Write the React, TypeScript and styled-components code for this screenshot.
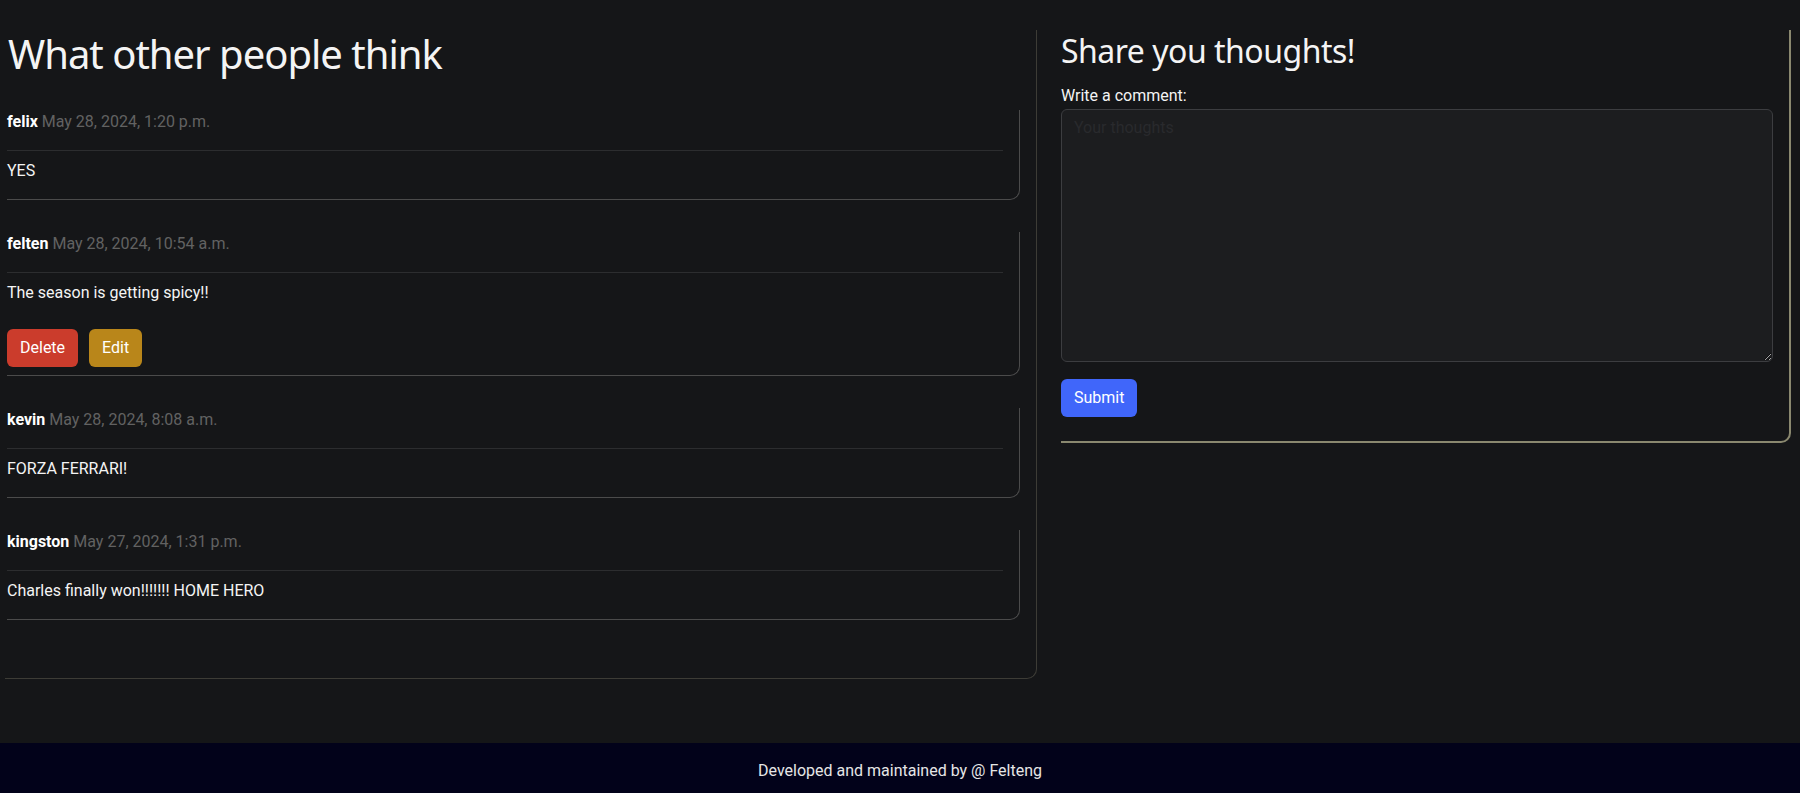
import React from "react";
import styled, { createGlobalStyle } from "styled-components";

const GlobalStyle = createGlobalStyle`
  html, body {
    margin: 0;
    padding: 0;
    background: #151618;
    color: #f1f1f1;
    font-family: Roboto, "Liberation Sans", Arial, sans-serif;
    font-size: 16px;
    line-height: 24px;
  }
  * { box-sizing: border-box; }
`;

const Page = styled.div`
  min-height: 100vh;
  display: flex;
  flex-direction: column;
`;

const Main = styled.main`
  flex: 1;
  display: flex;
  align-items: flex-start;
  gap: 24px;
  padding: 30px 9px 0 5px;
`;

const CommentsPanel = styled.section`
  width: 1032px;
  flex: none;
  padding: 0 16px 58px 2px;
  border-right: 1px solid #3d3c36;
  border-bottom: 1px solid #3d3c36;
  border-bottom-right-radius: 10px;
`;

const Title = styled.h1`
  margin: 0 0 32px 1px;
  font-family: "Noto Sans", "Open Sans", sans-serif;
  font-weight: 400;
  font-size: 40px;
  line-height: 48px;
  letter-spacing: -1px;
  color: #f4f4f4;
`;

const CommentList = styled.div`
  display: flex;
  flex-direction: column;
  gap: 32px;
`;

const Card = styled.article`
  padding: 0 16px 0 0;
  border-right: 1px solid #4b4b4b;
  border-bottom: 1px solid #4b4b4b;
  border-bottom-right-radius: 10px;
`;

const Meta = styled.p`
  margin: 0;
  font-size: 16px;
  line-height: 24px;
`;

const Author = styled.strong`
  font-weight: 700;
  color: #ffffff;
`;

const DateText = styled.span`
  color: #626262;
`;

const Divider = styled.hr`
  margin: 16px 0 8px;
  border: 0;
  border-top: 1px solid #2c2d2f;
`;

const Body = styled.p`
  margin: 0 0 16px;
  color: #f4f4f4;
`;

const Actions = styled.div`
  display: flex;
  gap: 11px;
  margin: 24px 0 8px;
`;

const ActionButton = styled.button<{ $tone: "danger" | "warning" | "primary" }>`
  font-family: Roboto, "Liberation Sans", Arial, sans-serif;
  font-size: 16px;
  line-height: 24px;
  color: #ffffff;
  border: 0;
  border-radius: 6px;
  padding: 7px 13px;
  cursor: pointer;
  background: ${(p) =>
    p.$tone === "danger" ? "#cb3c2c" : p.$tone === "warning" ? "#b9861a" : "#4066fa"};
`;

const FormPanel = styled.section`
  flex: 1;
  padding: 0 16px 24px 0;
  border-right: 2px solid #8a886f;
  border-bottom: 2px solid #8a886f;
  border-bottom-right-radius: 10px;
`;

const FormTitle = styled.h2`
  margin: 2px 0 14px;
  font-family: "Noto Sans", "Open Sans", sans-serif;
  font-weight: 400;
  font-size: 32px;
  line-height: 38px;
  letter-spacing: -0.5px;
  color: #f4f4f4;
`;

const Label = styled.label`
  display: block;
  margin-bottom: 1px;
  font-size: 16px;
  line-height: 24px;
  color: #f4f4f4;
`;

const TextArea = styled.textarea`
  display: block;
  width: 100%;
  height: 253px;
  margin: 0 0 17px;
  padding: 6px 12px;
  background: #1c1d1f;
  border: 1px solid #3c3d40;
  border-radius: 6px;
  color: #e0e0e0;
  font-family: Roboto, "Liberation Sans", Arial, sans-serif;
  font-size: 16px;
  line-height: 24px;
  outline: none;
  &::placeholder {
    color: #292a2d;
  }
`;

const Footer = styled.footer`
  height: 50px;
  display: flex;
  align-items: center;
  justify-content: center;
  padding-top: 5px;
  background: #02021a;
  color: #e6e6e6;
  font-size: 16px;
`;

type Comment = {
  author: string;
  date: string;
  text: string;
  own?: boolean;
};

const comments: Comment[] = [
  { author: "felix", date: "May 28, 2024, 1:20 p.m.", text: "YES" },
  { author: "felten", date: "May 28, 2024, 10:54 a.m.", text: "The season is getting spicy!!", own: true },
  { author: "kevin", date: "May 28, 2024, 8:08 a.m.", text: "FORZA FERRARI!" },
  { author: "kingston", date: "May 27, 2024, 1:31 p.m.", text: "Charles finally won!!!!!!! HOME HERO" },
];

export default function App() {
  return (
    <>
      <GlobalStyle />
      <Page>
        <Main>
          <CommentsPanel>
            <Title>What other people think</Title>
            <CommentList>
              {comments.map((c) => (
                <Card key={c.author}>
                  <Meta>
                    <Author>{c.author}</Author> <DateText>{c.date}</DateText>
                  </Meta>
                  <Divider />
                  <Body>{c.text}</Body>
                  {c.own && (
                    <Actions>
                      <ActionButton $tone="danger">Delete</ActionButton>
                      <ActionButton $tone="warning">Edit</ActionButton>
                    </Actions>
                  )}
                </Card>
              ))}
            </CommentList>
          </CommentsPanel>
          <FormPanel>
            <FormTitle>Share you thoughts!</FormTitle>
            <Label htmlFor="comment">Write a comment:</Label>
            <TextArea id="comment" placeholder="Your thoughts" />
            <ActionButton $tone="primary">Submit</ActionButton>
          </FormPanel>
        </Main>
        <Footer>Developed and maintained by @ Felteng</Footer>
      </Page>
    </>
  );
}
